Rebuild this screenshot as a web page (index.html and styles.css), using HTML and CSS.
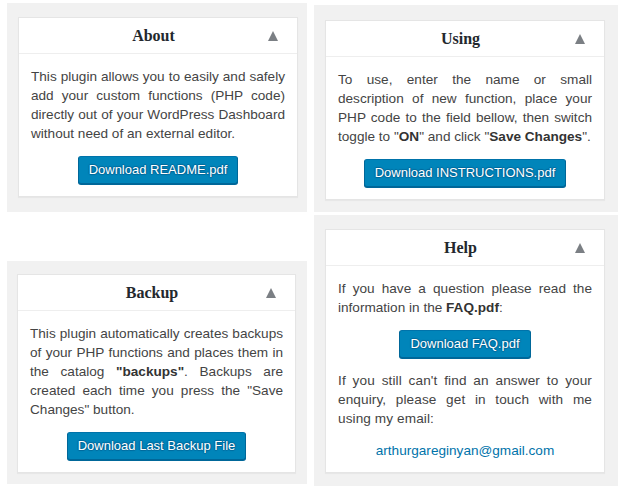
FILE: index.html
```html
<!DOCTYPE html>
<html lang="en">
<head>
<meta charset="utf-8">
<title>Plugin info</title>
<link rel="stylesheet" href="styles.css">
</head>
<body>
<div class="page">
  <div class="col col-left">
    <section class="panel panel-about">
      <div class="card">
        <div class="card-head">
          <h2>About</h2>
          <svg class="toggle" viewBox="0 0 10 10" aria-hidden="true"><polygon points="5,0 10,10 0,10"/></svg>
        </div>
        <div class="card-body">
          <p>This plugin allows you to easily and safely add your custom functions (PHP code) directly out of your WordPress Dashboard without need of an external editor.</p>
          <div class="actions"><a class="button" href="#">Download README.pdf</a></div>
        </div>
      </div>
    </section>
    <section class="panel panel-backup">
      <div class="card card-narrow">
        <div class="card-head">
          <h2>Backup</h2>
          <svg class="toggle" viewBox="0 0 10 10" aria-hidden="true"><polygon points="5,0 10,10 0,10"/></svg>
        </div>
        <div class="card-body">
          <p>This plugin automatically creates backups of your PHP functions and places them in the catalog <b>"backups"</b>. Backups are created each time you press the "Save Changes" button.</p>
          <div class="actions"><a class="button" href="#">Download Last Backup File</a></div>
        </div>
      </div>
    </section>
  </div>
  <div class="col col-right">
    <section class="panel panel-using">
      <div class="card">
        <div class="card-head">
          <h2>Using</h2>
          <svg class="toggle" viewBox="0 0 10 10" aria-hidden="true"><polygon points="5,0 10,10 0,10"/></svg>
        </div>
        <div class="card-body">
          <p>To use, enter the name or small description of new function, place your PHP code to the field bellow, then switch toggle to "<b>ON</b>" and click "<b>Save Changes</b>".</p>
          <div class="actions"><a class="button" href="#">Download INSTRUCTIONS.pdf</a></div>
        </div>
      </div>
    </section>
    <section class="panel panel-help">
      <div class="card">
        <div class="card-head">
          <h2>Help</h2>
          <svg class="toggle" viewBox="0 0 10 10" aria-hidden="true"><polygon points="5,0 10,10 0,10"/></svg>
        </div>
        <div class="card-body">
          <p>If you have a question please read the information in the <b>FAQ.pdf</b>:</p>
          <div class="actions"><a class="button" href="#">Download FAQ.pdf</a></div>
          <p class="para-loose">If you still can't find an answer to your enquiry, please get in touch with me using my email:</p>
          <div class="email"><a href="#">arthurgareginyan@gmail.com</a></div>
        </div>
      </div>
    </section>
  </div>
</div>
</body>
</html>
```
FILE: styles.css
```css
html, body {
  margin: 0;
  padding: 0;
  background: #fff;
}

body {
  font-family: "Liberation Sans", Arial, Helvetica, sans-serif;
  color: #444;
}

.page {
  display: flex;
  align-items: flex-start;
}

.col {
  display: flex;
  flex-direction: column;
}

.col-left {
  margin-left: 7px;
  width: 300px;
}

.col-right {
  margin-left: 7px;
  width: 304px;
}

.panel {
  background: #f1f1f1;
}

.panel-about {
  margin-top: 3px;
  padding: 14px 9px 15px 11px;
}

.panel-backup {
  margin-top: 49px;
  padding: 13px 11px 11px 10px;
}

.panel-using {
  margin-top: 5px;
  padding: 15px 13px 12px 11px;
}

.panel-help {
  margin-top: 3px;
  padding: 14px 13px 13px 11px;
}

.card {
  box-sizing: border-box;
  width: 280px;
  background: #fff;
  border: 1px solid #e5e5e5;
  box-shadow: 0 1px 1px rgba(0, 0, 0, 0.04);
}

.card-narrow {
  width: 279px;
}

.card-head {
  display: flex;
  align-items: center;
  height: 35px;
  padding: 0 19px 0 20px;
  border-bottom: 1px solid #eee;
}

.card-head h2 {
  flex: 1;
  margin: 0;
  text-align: center;
  font-family: "Liberation Serif", "Times New Roman", serif;
  font-weight: bold;
  font-size: 16px;
  color: #23282d;
}

.toggle {
  flex: none;
  width: 10px;
  height: 10px;
  margin-top: 1px;
  fill: #7b7f84;
}

.card-body {
  display: flex;
  flex-direction: column;
  gap: 13px;
  padding: 13px 12px 12px;
}

.card-body p {
  margin: 0;
  font-size: 13.6px;
  line-height: 19px;
  text-align: justify;
  color: #444;
}

.card-body .para-loose {
  letter-spacing: 0.1px;
}

.card-body b {
  font-weight: bold;
  color: #333;
}

.actions {
  text-align: center;
  font-size: 0;
}

.button {
  display: inline-block;
  box-sizing: border-box;
  height: 28px;
  padding: 0 10px;
  font-size: 13px;
  line-height: 26px;
  color: #fff;
  text-decoration: none;
  background: #0085ba;
  border: 1px solid;
  border-color: #0073aa #006799 #006799;
  border-radius: 3px;
  box-shadow: 0 1px 0 #006799;
  text-shadow: 0 -1px 1px #006799, 1px 0 1px #006799, 0 1px 1px #006799, -1px 0 1px #006799;
}

.email {
  text-align: center;
  font-size: 13.6px;
  line-height: 19px;
}

.email a {
  color: #0073aa;
  text-decoration: none;
}
```
